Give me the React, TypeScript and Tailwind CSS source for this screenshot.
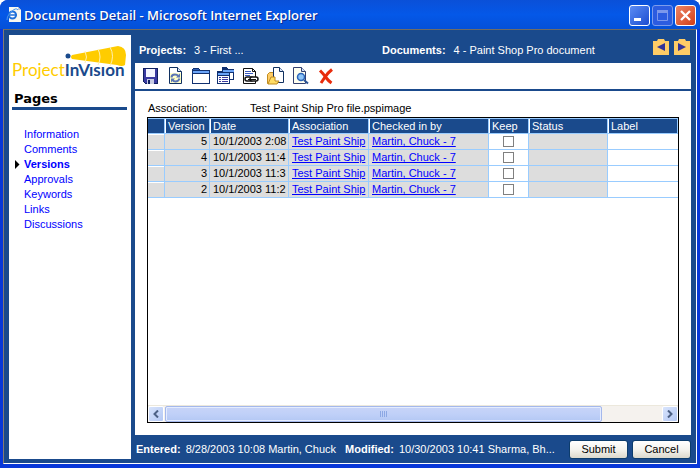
import type { ReactNode } from "react";

const pages = ["Information", "Comments", "Versions", "Approvals", "Keywords", "Links", "Discussions"];

const rows = [
  { version: 5, date: "10/1/2003 2:08" },
  { version: 4, date: "10/1/2003 11:4" },
  { version: 3, date: "10/1/2003 11:3" },
  { version: 2, date: "10/1/2003 11:2" },
];

function Logo() {
  return (
    <div className="relative h-[38px] w-[116px]">
      <svg className="absolute inset-0" width="116" height="38" viewBox="0 0 116 38" aria-hidden="true">
        <path d="M60 10 L106 1 Q114 2 114 10 L113 20 Q110 22 105 20 L60 14 Q58 12 60 10Z" fill="#fc0" />
        <path d="M73 6q3 6 0 12M86 4q4 8 0 16M98 2q5 9 0 19" fill="none" stroke="#fff0b0" />
        <circle cx="56" cy="11" r="2.5" fill="#1a4a8c" />
      </svg>
      <div className="absolute top-[15px] left-0 flex items-baseline font-[Lato,sans-serif] text-[17px] leading-5 whitespace-nowrap">
        <span className="text-[#fc0]">Project</span>
        <span className="font-bold text-[#1a4a8c]">InVısıon</span>
      </div>
    </div>
  );
}

function Glyph({ children }: { children: ReactNode }) {
  return (
    <svg width="21" height="20" viewBox="0 0 21 20" aria-hidden="true">
      {children}
    </svg>
  );
}

const tools: { label: string; art: ReactNode }[] = [
  {
    label: "Save",
    art: (
      <g shapeRendering="crispEdges">
        <path d="M3 2h15v16H5l-2-2z" fill="#102060" />
        <path d="M4 3h13v14H5l-1-1z" fill="#3a3aa0" />
        <path d="M6 3h9v8H6z" fill="#f4f6ff" />
        <path d="M7 13h7v5H7z" fill="#c8cce4" />
        <path d="M8 14h2v4H8z" fill="#102060" />
      </g>
    ),
  },
  {
    label: "Refresh",
    art: (
      <g>
        <path d="M4.5 1.5h8l4 4v12h-12z" fill="#fff" stroke="#103060" />
        <path d="M12.5 1.5v4h4" fill="#d8e4f8" stroke="#103060" />
        <path d="M5 7h11v10H5z" fill="#ffffc8" />
        <path d="M6.5 11.5q0-3 3.500-3 2 0 3.500 1.500M14.500 12.500q-1 3-4 3-2 0-3-1.500" fill="none" stroke="#5a74b4" strokeWidth="2" />
        <path d="M15 7.500v4h-4zM6 16.500v-4h4z" fill="#5a74b4" />
      </g>
    ),
  },
  {
    label: "Folder",
    art: (
      <g shapeRendering="crispEdges">
        <path d="M3 2h6v1h1v1h10v14H2V3h1z" fill="#103070" />
        <path d="M3 3h6v1H3z" fill="#2c5cb0" />
        <path d="M3 5h16v2H3z" fill="#6aa4f8" />
        <path d="M3 8h16v9H3z" fill="#fff" />
      </g>
    ),
  },
  {
    label: "Folder list",
    art: (
      <g shapeRendering="crispEdges">
        <path d="M7 1h5v1h1v1h6v11H7z" fill="#103070" />
        <path d="M8 4h11v2H8z" fill="#6aa4f8" />
        <path d="M8 7h10v6H8z" fill="#fff" />
        <path d="M2 5h5v1h1v1h7v11H2z" fill="#103070" />
        <path d="M3 7h11v2H3z" fill="#6aa4f8" />
        <path d="M3 10h11v7H3z" fill="#fff" />
        <path d="M4 11h2v1H4zM7 11h6v1H7zM4 13h2v1H4zM7 13h6v1H7zM4 15h2v1H4zM7 15h6v1H7z" fill="#3a3aa0" />
      </g>
    ),
  },
  {
    label: "Attach link",
    art: (
      <g>
        <path d="M3.500 2.500h9l3 3v12h-12z" fill="#fff" stroke="#111" />
        <path d="M12.500 2.500v3h3" fill="none" stroke="#111" />
        <path d="M5 5.500h6M5 7.500h8M5 9.500h5" stroke="#3a5ac0" />
        <rect x="5" y="11" width="8" height="4" rx="2" fill="#fff" stroke="#111" strokeWidth="1.500" />
        <rect x="10" y="11" width="8" height="4" rx="2" fill="#fff" stroke="#111" strokeWidth="1.500" />
        <path d="M8 13.500h8" stroke="#111" />
      </g>
    ),
  },
  {
    label: "Open document",
    art: (
      <g>
        <path d="M2.500 17.500v-9l2-2h4v11z" fill="#fc6" stroke="#c08c20" />
        <path d="M8.500 1.500h6l4 4v11h-10z" fill="#fff" stroke="#103060" />
        <path d="M14.500 1.500v4h4" fill="#d8e4f8" stroke="#103060" />
        <path d="M3 18l3-7h4v4h4l-2 3z" fill="#fd6" stroke="#c08c20" />
      </g>
    ),
  },
  {
    label: "Preview",
    art: (
      <g>
        <path d="M3.500 1.500h8l4 4v12h-12z" fill="#fffff0" stroke="#334070" />
        <path d="M11.500 1.500v4h4" fill="#d8e4f8" stroke="#334070" />
        <circle cx="11" cy="11" r="3.500" fill="#8cc4f8" stroke="#2c64b8" strokeWidth="1.500" />
        <path d="M14 14l4 3.500" stroke="#2c5494" strokeWidth="2" />
      </g>
    ),
  },
  {
    label: "Delete",
    art: <path d="M5 4.500q4 4 5.500 6.500 3 4 6 6M17 3.500q-5 4-7 7.500-2 3-4 6" fill="none" stroke="#e82c0c" strokeWidth="3" />,
  },
];

function FolderArrow({ label, d }: { label: string; d: string }) {
  return (
    <button type="button" aria-label={label} className="block">
      <svg width="16" height="16" viewBox="0 0 16 16" aria-hidden="true">
        <path d="M0 2h4l1-2h6l1 2h4v14H0z" fill="#fc6" />
        <path d={d} fill="#339" />
      </svg>
    </button>
  );
}

function TitleBar() {
  return (
    <header className="flex h-[29px] shrink-0 items-center rounded-t-lg bg-linear-to-b from-[#0a50d8] via-[#0458e8] to-[#0450d8] pr-1 pl-[6px]">
      <svg width="16" height="16" viewBox="0 0 16 16" aria-hidden="true">
        <path d="M3 0h9l3 3v12H3z" fill="#f8f8f0" />
        <path d="M12 0v3h3" fill="#c4c8d4" />
        <circle cx="6.500" cy="8" r="3.500" fill="#fff" stroke="#2070d8" strokeWidth="2" />
        <path d="M3 8h8" stroke="#2070d8" strokeWidth="1.500" />
        <path d="M1 13Q0 10 5 5T12 3" fill="none" stroke="#4494f0" />
      </svg>
      <h1 className="ml-[2px] flex-1 truncate font-['Open_Sans',sans-serif] text-[13px] leading-5 font-semibold text-white [text-shadow:1px_1px_#0a2c90]">
        Documents Detail - Microsoft Internet Explorer
      </h1>
      <div className="mt-[2px] flex gap-[2px]">
        <button type="button" aria-label="Minimize" className="h-[21px] w-[21px] rounded-[3px] border border-white bg-linear-to-br from-[#5c8cf4] to-[#1c4cd0]">
          <svg width="19" height="19" viewBox="0 0 19 19" aria-hidden="true"><path d="M4 12h7v3H4z" fill="#fff" /></svg>
        </button>
        <button type="button" aria-label="Maximize" disabled className="h-[21px] w-[21px] rounded-[3px] border border-[#7c9cec] bg-[#2c5ce0]">
          <svg width="19" height="19" viewBox="0 0 19 19" aria-hidden="true">
            <path d="M4.500 5.500h10v9h-10z" fill="none" stroke="#7c98ec" />
            <path d="M4 4h11v3H4z" fill="#7c98ec" />
          </svg>
        </button>
        <button type="button" aria-label="Close" className="h-[21px] w-[21px] rounded-[3px] border border-white bg-linear-to-br from-[#ec8464] to-[#d03c10]">
          <svg width="19" height="19" viewBox="0 0 19 19" aria-hidden="true"><path d="M5 5l9 9M14 5l-9 9" stroke="#fff" strokeWidth="2.300" /></svg>
        </button>
      </div>
    </header>
  );
}

function Sidebar() {
  return (
    <aside className="w-[122px] shrink-0 bg-white pt-[10px] pl-[3px]">
      <Logo />
      <h2 className="mt-[8px] mr-1 border-b-3 border-[#1a4a8c] pl-[2px] font-['DejaVu_Sans',sans-serif] text-[13px] leading-4 font-bold">Pages</h2>
      <nav className="mt-[17px]">
        <ul>
          {pages.map((page) => (
            <li key={page} className="flex h-[15px] items-center leading-[15px]">
              <span className="w-3 pl-[3px]">
                {page === "Versions" && (
                  <svg width="5" height="9" viewBox="0 0 5 9" aria-hidden="true"><path d="M0 0l4.500 4.500L0 9z" fill="#000" /></svg>
                )}
              </span>
              <a href="#" className={page === "Versions" ? "font-bold text-[#00f]" : "text-[#00f]"}>{page}</a>
            </li>
          ))}
        </ul>
      </nav>
    </aside>
  );
}

const head = "overflow-hidden border-r border-b border-[#99ccff] p-0 text-left font-normal whitespace-nowrap";
const cell = "overflow-hidden border-r border-b border-[#99ccff] bg-[#ddd] p-0 whitespace-nowrap";

function VersionGrid() {
  return (
    <table className="w-full table-fixed border-separate border-spacing-0 border-t border-[#99ccff] leading-[15px]">
      <colgroup>
        <col className="w-[17px]" />
        <col className="w-[45px]" />
        <col className="w-[79px]" />
        <col className="w-[80px]" />
        <col className="w-[120px]" />
        <col className="w-[40px]" />
        <col className="w-[79px]" />
        <col />
      </colgroup>
      <thead>
        <tr className="h-[15px] bg-[#1a4a8c] leading-[14px] text-white">
          <td className={head} />
          {["Version", "Date", "Association", "Checked in by", "Keep", "Status", "Label"].map((name) => (
            <th key={name} scope="col" className={head}>
              <div className="border-l border-white pl-[2px]">{name}</div>
            </th>
          ))}
        </tr>
      </thead>
      <tbody>
        {rows.map((row) => (
          <tr key={row.version} className="h-4">
            <td className={cell}><div className="h-[15px] border-t border-white" /></td>
            <td className={cell}><div className="pr-[2px] text-right">{row.version}</div></td>
            <td className={cell}><div className="ml-[3px]">{row.date}</div></td>
            <td className={cell}><div className="ml-[3px]"><a href="#" className="text-[#00f] underline">Test Paint Ship</a></div></td>
            <td className={cell}><a href="#" className="ml-[3px] text-[#00f] underline">Martin, Chuck - 7</a></td>
            <td className="border-r border-b border-[#99ccff] bg-white p-0">
              <input type="checkbox" aria-label={`Keep version ${row.version}`} className="mx-auto block h-[11px] w-[11px] appearance-none border border-[#808080] bg-white" />
            </td>
            <td className={cell} />
            <td className="border-b border-[#99ccff] bg-white p-0" />
          </tr>
        ))}
      </tbody>
    </table>
  );
}

function ScrollButton({ label, d }: { label: string; d: string }) {
  return (
    <button type="button" aria-label={label} className="flex h-4 w-4 items-center justify-center rounded-[2px] border border-white bg-linear-to-br from-[#d8e4fc] to-[#b4c8f4]">
      <svg width="8" height="8" viewBox="0 0 8 8" aria-hidden="true"><path d={d} fill="none" stroke="#4d6185" strokeWidth="2" /></svg>
    </button>
  );
}

function ScrollBar() {
  return (
    <div className="mt-auto flex h-[17px] border-t border-[#ece8dc] bg-[#f5f2ee]">
      <ScrollButton label="Scroll left" d="M6 0.500L2.500 4 6 7.500" />
      <div className="flex-1 pl-px">
        <div className="flex h-4 w-[88%] items-center justify-center gap-px rounded-[2px] border border-[#a4b8ec] bg-linear-to-b from-[#c8d4f8] via-[#c0d0f8] to-[#b4c8f4] shadow-[inset_0_0_0_1px_#e4ecff]">
          {[0, 1, 2, 3].map((n) => (
            <span key={n} className="h-[6px] w-px bg-[#8ca8e4]" />
          ))}
        </div>
      </div>
      <ScrollButton label="Scroll right" d="M2 0.500L5.500 4 2 7.500" />
    </div>
  );
}

const pushButton =
  "h-[19px] w-[59px] rounded-[3px] border border-[#0c3c6c] bg-linear-to-b from-white via-[#f4f3ee] to-[#dcd8cc] leading-4 text-black";

export default function App() {
  return (
    <div className="flex h-screen flex-col rounded-t-lg bg-[#0838d8] font-['Liberation_Sans',Arial,sans-serif] text-[11px] text-black">
      <TitleBar />
      <div className="mr-[3px] mb-1 ml-[3px] flex min-h-0 flex-1 border border-t-[#706c64] border-r-white border-b-white border-l-[#847c74] bg-[#1a4a8c] pl-[5px]">
        <div className="flex pt-[5px] pb-1">
          <Sidebar />
        </div>
        <main className="mr-[5px] ml-1 flex min-w-0 flex-1 flex-col">
          <div className="grid h-[33px] shrink-0 grid-cols-[243px_1fr_auto] items-center pt-[7px] pl-1 text-white">
            <div><b className="mr-2">Projects:</b>3 - First ...</div>
            <div><b className="mr-2">Documents:</b>4 - Paint Shop Pro document</div>
            <div className="mr-px mb-[7px] flex gap-[5px]">
              <FolderArrow label="Previous document" d="M12 4v8L4 8z" />
              <FolderArrow label="Next document" d="M4 4v8l8-4z" />
            </div>
          </div>
          <div className="flex h-[26px] shrink-0 items-center bg-white pl-[3px]">
            {tools.map((tool) => (
              <button key={tool.label} type="button" aria-label={tool.label} className="flex w-[25px] justify-center">
                <Glyph>{tool.art}</Glyph>
              </button>
            ))}
          </div>
          <section className="mt-[2px] flex min-h-0 flex-1 flex-col bg-white pt-[9px] pr-3 pb-3 pl-3">
            <dl className="mb-px flex pl-px leading-4">
              <dt className="w-[102px]">Association:</dt>
              <dd>Test Paint Ship Pro file.pspimage</dd>
            </dl>
            <div className="flex min-h-0 flex-1 flex-col overflow-hidden border border-black">
              <VersionGrid />
              <ScrollBar />
            </div>
          </section>
          <footer className="flex h-7 shrink-0 items-center gap-1 whitespace-nowrap text-white">
            <div className="flex min-w-0 flex-1 gap-[9px] pl-px">
              <span><b className="mr-[5px]">Entered:</b>8/28/2003 10:08 Martin, Chuck</span>
              <span><b className="mr-[5px]">Modified:</b>10/30/2003 10:41 Sharma, Bh...</span>
            </div>
            <button type="submit" className={pushButton}>Submit</button>
            <button type="button" className={pushButton}>Cancel</button>
          </footer>
        </main>
      </div>
    </div>
  );
}
